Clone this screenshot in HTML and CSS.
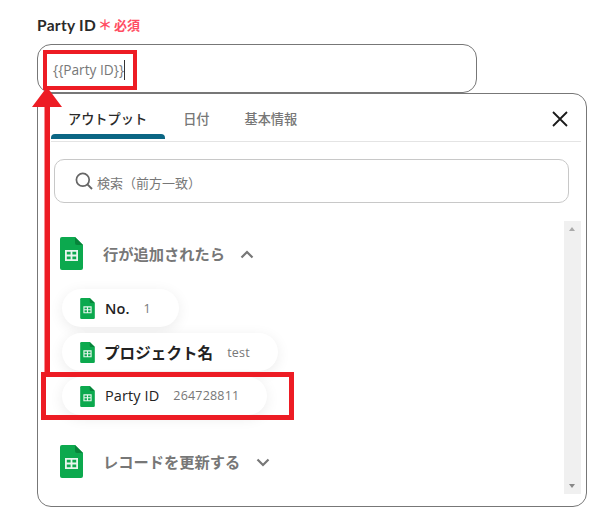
FILE: index.html
```html
<!DOCTYPE html>
<html lang="ja">
<head>
<meta charset="utf-8">
<title>Party ID</title>
<link rel="stylesheet" href="styles.css">
</head>
<body>
<svg class="defs" width="0" height="0" aria-hidden="true">
  <symbol id="sheet" viewBox="0 0 23 33">
    <path d="M2 0H15L23 8V31a2 2 0 0 1-2 2H2a2 2 0 0 1-2-2V2a2 2 0 0 1 2-2Z" fill="#0ca94e"/>
    <path d="M15 0L23 8H17a2 2 0 0 1-2-2Z" fill="#07843a"/>
    <path d="M5 13H18V24H5ZM6.8 14.8V17.6H10.6V14.8ZM12.4 14.8V17.6H16.2V14.8ZM6.8 19.4V22.2H10.6V19.4ZM12.4 19.4V22.2H16.2V19.4Z" fill="#e8f6ee" fill-rule="evenodd"/>
  </symbol>
</svg>
<main class="page">
  <div class="label"><span class="label-name">Party ID</span><span class="star">＊</span><span class="req">必須</span></div>
  <div class="field"><span class="field-text">{{Party ID}}</span><span class="caret"></span></div>
  <section class="popup">
    <nav class="tabs">
      <span class="tab tab-active">アウトプット</span>
      <span class="tab">日付</span>
      <span class="tab tab-last">基本情報</span>
      <svg class="close" viewBox="0 0 16 16" width="16" height="16"><path d="M1 1L15 15M15 1L1 15" stroke="#1a1a1a" stroke-width="1.8" fill="none"/></svg>
    </nav>
    <div class="body">
      <div class="search">
        <svg class="lens" viewBox="0 0 18 18" width="18" height="18"><circle cx="7.8" cy="7.8" r="6.4" stroke="#666" stroke-width="1.7" fill="none"/><path d="M12.4 12.4L17 17" stroke="#666" stroke-width="1.9" fill="none"/></svg>
        <span class="search-text">検索（前方一致）</span>
      </div>
      <div class="scrollarea">
        <div class="list">
          <div class="group">
            <svg class="sheet-lg"><use href="#sheet"/></svg>
            <span class="group-title">行が追加されたら</span>
            <svg class="chev" viewBox="0 0 14 9" width="14" height="9"><path d="M1.5 7.5L7 2L12.5 7.5" stroke="#777" stroke-width="2.2" fill="none"/></svg>
          </div>
          <div class="pills">
            <div class="pill pill-upper"><svg class="sheet-sm"><use href="#sheet"/></svg><span class="pill-name pill-no">No.</span><span class="pill-val">1</span></div>
            <div class="pill pill-upper"><svg class="sheet-sm"><use href="#sheet"/></svg><span class="pill-name pill-jp">プロジェクト名</span><span class="pill-val">test</span></div>
            <div class="pill"><svg class="sheet-sm"><use href="#sheet"/></svg><span class="pill-name">Party ID</span><span class="pill-val">264728811</span></div>
          </div>
          <div class="group group-second">
            <svg class="sheet-lg"><use href="#sheet"/></svg>
            <span class="group-title">レコードを更新する</span>
            <svg class="chev" viewBox="0 0 14 9" width="14" height="9"><path d="M1.5 1.5L7 7L12.5 1.5" stroke="#777" stroke-width="2.2" fill="none"/></svg>
          </div>
        </div>
        <div class="scrollbar">
          <span class="arrow-up"></span>
          <span class="arrow-down"></span>
        </div>
      </div>
    </div>
  </section>
</main>
<div class="mark mark-field"></div>
<div class="mark mark-pill"></div>
<svg class="mark-arrow" viewBox="0 0 30 288" width="30" height="288"><path d="M15 0L30 20H18V288H12.500V20H0Z" fill="#ed1c24"/></svg>
</body>
</html>
```
FILE: styles.css
```css
* { box-sizing: border-box; }
html, body { margin: 0; padding: 0; background: #fff; }
body {
  width: 602px;
  height: 512px;
  overflow: hidden;
  position: relative;
  font-family: "Open Sans", "Noto Sans CJK JP", sans-serif;
  color: #222;
}
.defs { position: absolute; }
.page { padding: 15px 15px 0 37px; }
.label { display: flex; align-items: center; height: 19px; margin-bottom: 10px; }
.label-name { font-family: "Lato", "Noto Sans CJK JP", sans-serif; font-size: 15.5px; font-weight: 700; color: #2a2a2a; letter-spacing: 0.3px; }
.star { color: #ff4d63; font-size: 14px; font-weight: 700; line-height: 19px; margin-left: 2px; font-family: "Noto Sans CJK JP", sans-serif; }
.req { color: #ff4d63; font-size: 13px; font-weight: 700; margin-left: 2px; font-family: "Noto Sans CJK JP", sans-serif; }
.field {
  width: 440px;
  height: 49px;
  border: 1px solid #777;
  border-radius: 14px;
  display: flex;
  align-items: center;
  padding-left: 15px;
  padding-top: 2px;
  font-size: 13.7px;
  color: #777;
  background: #fff;
}
.caret { width: 1px; height: 20px; background: #333; }
.popup {
  width: 550px;
  height: 414px;
  border: 1px solid #777;
  border-radius: 14px;
  background: #fff;
  padding: 0 5px 0 13px;
  position: relative;
}
.tabs {
  height: 48px;
  border-bottom: 1px solid #e4e4e4;
  display: flex;
  align-items: center;
  position: relative;
  font-family: "Noto Sans CJK JP", sans-serif;
  font-size: 13.2px;
  font-weight: 500;
  color: #777;
  padding-top: 2px;
}
.tab { margin-left: 36px; }
.tab:first-child { margin-left: 17px; }
.tab-last { margin-left: 35px; }
.tab-active { color: #2a2a2a; position: relative; }
.tab-active::after {
  content: "";
  position: absolute;
  left: -17px;
  right: -18px;
  top: 25px;
  height: 5px;
  background: #0b6684;
  border-radius: 4px 4px 0 0;
}
.close { margin-left: auto; margin-right: 13px; }
.body { padding: 17px 0 0 3px; }
.search {
  width: 515px;
  height: 44px;
  border: 1px solid #c8c8c8;
  border-radius: 10px;
  display: flex;
  align-items: center;
  padding-left: 20px;
  gap: 4px;
  font-family: "Noto Sans CJK JP", sans-serif;
  font-size: 13px;
  color: #777;
}
.search-text { padding-top: 2px; }
.scrollarea { display: flex; margin-top: 18px; height: 273px; }
.list { flex: 1; padding: 16px 0 0 6px; }
.group { display: flex; align-items: center; height: 33px; }
.sheet-lg { width: 23px; height: 33px; flex: none; }
.sheet-sm { width: 15px; height: 21px; flex: none; }
.group-title { font-family: "Noto Sans CJK JP", sans-serif; font-size: 15.25px; font-weight: 700; color: #777; margin-left: 20px; padding-bottom: 2px; }
.chev { margin-left: 15px; margin-top: 2px; }
.group-second .chev { margin-left: 16px; }
.pills { display: flex; flex-direction: column; align-items: flex-start; gap: 6px; margin: 19px 0 0 2px; }
.pill {
  height: 38px;
  border-radius: 19px;
  background: #fff;
  box-shadow: 0 3px 14px rgba(0, 0, 0, 0.08);
  display: flex;
  align-items: center;
  padding: 0 28px 0 18px;
  font-size: 14.5px;
}
.pill-name { margin-left: 10px; font-weight: 500; color: #222; font-family: "Open Sans", "Noto Sans CJK JP", sans-serif; letter-spacing: 0.1px; padding-bottom: 2px; }
.pill-no { font-weight: 600; padding-bottom: 0; }
.pill-jp { font-family: "Noto Sans CJK JP", sans-serif; font-size: 15.5px; font-weight: 700; margin-left: 9px; padding-bottom: 1px; }
.pill-val { margin-left: 14px; font-size: 12.500px; color: #777; letter-spacing: 0.2px; padding-bottom: 2px; }
.pill-upper .pill-val { padding-bottom: 0; }
.group-second { margin-top: 30px; }
.scrollbar { width: 17px; background: #f0f0f0; position: relative; flex: none; margin-right: 0; }
.arrow-up, .arrow-down { position: absolute; left: 5px; width: 0; height: 0; border-left: 3.500px solid transparent; border-right: 3.500px solid transparent; }
.arrow-up { top: 6px; border-bottom: 4px solid #aaa; }
.arrow-down { bottom: 6px; border-top: 4px solid #888; }
.mark { position: absolute; border: 4px solid #ed1c24; }
.mark-field { left: 43px; top: 50px; width: 94px; height: 40px; }
.mark-pill { left: 41px; top: 372px; width: 253px; height: 48px; border-width: 5px; }
.mark-arrow { position: absolute; left: 32px; top: 87px; }
```
